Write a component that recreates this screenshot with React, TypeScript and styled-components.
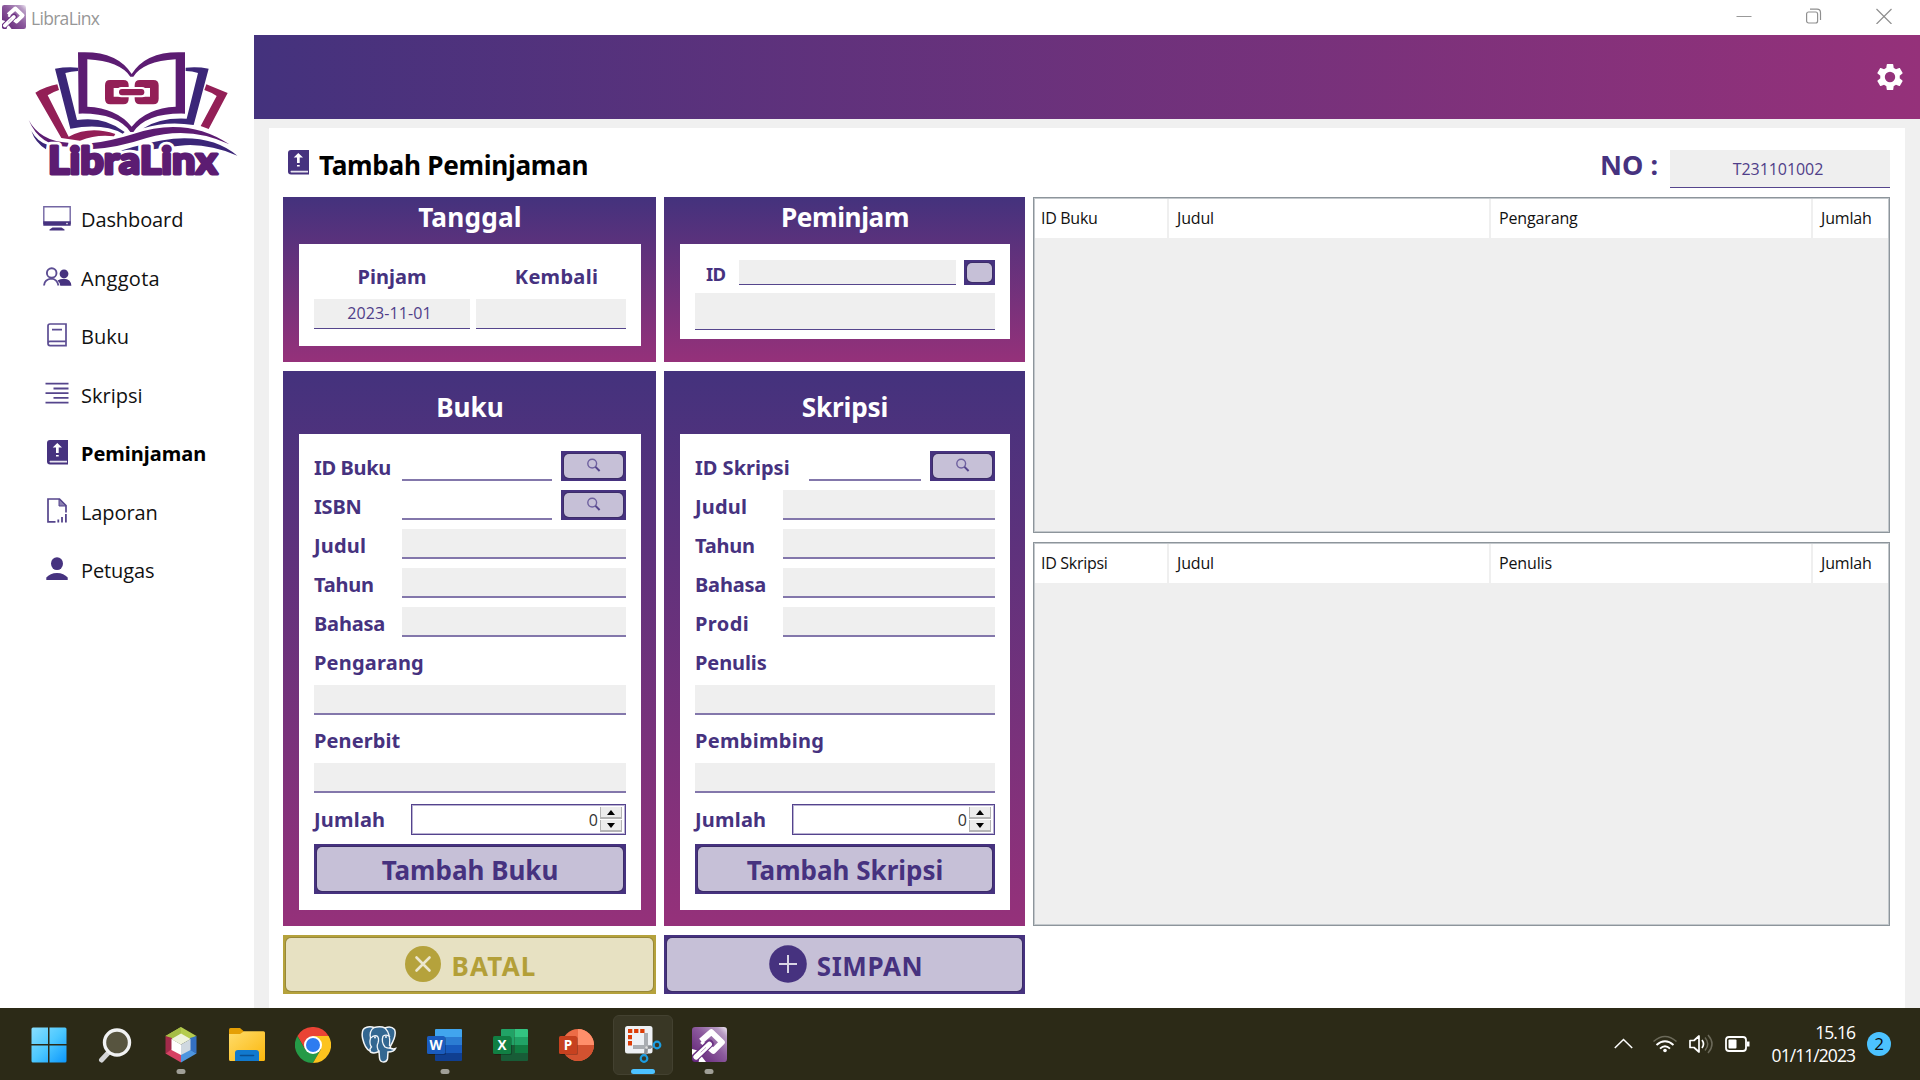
import React from 'react';
import styled, { createGlobalStyle } from 'styled-components';

const PURPLE = '#46327f';
const LILAC = '#c6c0d7';
const GREY = '#efefef';
const GRADIENT_FROM = '#44327d';
const GRADIENT_TO = '#95317a';

const GlobalStyle = createGlobalStyle`
  * { box-sizing: border-box; }
  body { margin: 0; background: #fff; overflow: hidden; }
  button { font: inherit; padding: 0; border: 0; }
`;

/* ---------- shell ---------- */

const Shell = styled.div`
  width: 1920px;
  height: 1080px;
  display: flex;
  flex-direction: column;
  background: #fff;
  color: #111;
  font-family: 'Noto Sans', 'Open Sans', sans-serif;
`;

const TitleBar = styled.header`
  height: 35px;
  flex: none;
  display: flex;
  align-items: flex-start;
  padding: 5px 28px 0 2px;
`;

const TitleText = styled.span`
  flex: 1;
  padding-left: 5px;
  font: 400 17.5px/27px 'Open Sans', sans-serif;
  letter-spacing: -0.7px;
  color: #979797;
`;

const WindowControls = styled.div`
  display: flex;
  gap: 54px;
  padding-top: 3px;
`;

const Body = styled.div`
  height: 973px;
  display: flex;
`;

/* ---------- sidebar ---------- */

const Sidebar = styled.nav`
  width: 254px;
  flex: none;
`;

const LogoArea = styled.div`
  height: 155px;
  padding: 15px 0 0 26px;
  line-height: 0;
`;

const NavItem = styled.a<{ $active?: boolean; $tracking?: number }>`
  height: 58.5px;
  display: grid;
  grid-template-columns: 30px 1fr;
  column-gap: 9px;
  align-items: center;
  padding: 2px 0 0 42px;
  font: ${p => (p.$active ? "700 20px/30px 'Noto Sans'" : "500 20px/30px 'Open Sans'")}, sans-serif;
  letter-spacing: ${p => p.$tracking ?? 0}px;
  color: ${p => (p.$active ? '#000' : '#111')};
  svg { display: block; margin: -4px auto 0; }
`;

/* ---------- main ---------- */

const Main = styled.main`
  flex: 1;
  background: #f0f0f0;
`;

const Banner = styled.div`
  height: 84px;
  display: flex;
  align-items: center;
  justify-content: flex-end;
  padding-right: 17px;
  background: linear-gradient(90deg, ${GRADIENT_FROM}, ${GRADIENT_TO});
`;

const Card = styled.section`
  height: 880px;
  margin: 9px 15px 0;
  padding: 0 15px 0 14px;
  background: #fff;
`;

const CardHead = styled.div`
  height: 69px;
  display: flex;
  align-items: flex-start;
  padding: 22px 0 0 5px;
`;

const PageTitle = styled.h1`
  flex: 1;
  margin: 0 0 0 10px;
  font-size: 26.2px;
  font-weight: 700;
  line-height: 30px;
  letter-spacing: -0.3px;
  color: #000;
`;

const NumberLabel = styled.span`
  margin-right: 12px;
  font-size: 27px;
  font-weight: 700;
  line-height: 30px;
  color: ${PURPLE};
`;

const Workspace = styled.div`
  display: grid;
  grid-template-columns: 373px 361px 857px;
  column-gap: 8px;
`;

const Stack = styled.div`
  display: grid;
  grid-template-rows: 165px 555px 59px;
  row-gap: 9px;
`;

const Panel = styled.section`
  padding: 0 15px 0 16px;
  background: linear-gradient(180deg, ${GRADIENT_FROM}, ${GRADIENT_TO});
`;

const PanelTitle = styled.h2<{ $tall?: boolean; $tracking?: number }>`
  height: ${p => (p.$tall ? 63 : 47)}px;
  margin: 0;
  padding-top: ${p => (p.$tall ? 8 : 0)}px;
  text-align: center;
  font-size: 26.2px;
  font-weight: 700;
  line-height: ${p => (p.$tall ? 57 : 41)}px;
  letter-spacing: ${p => p.$tracking ?? 0}px;
  color: #fff;
`;

const Sheet = styled.div<{ $h: number; $top: number }>`
  height: ${p => p.$h}px;
  padding: ${p => p.$top}px 15px 0;
  display: flex;
  flex-direction: column;
  gap: 9px;
  background: #fff;
`;

const Row = styled.div`
  display: flex;
  height: 30px;
  flex: none;
`;

const Label = styled.label<{ $w?: number; $tracking?: number }>`
  width: ${p => (p.$w ? p.$w + 'px' : 'auto')};
  flex: none;
  font-size: 20px;
  font-weight: 700;
  line-height: 34px;
  letter-spacing: ${p => p.$tracking ?? 0}px;
  white-space: nowrap;
  color: ${PURPLE};
`;

const Field = styled.div<{ $w?: number; $h?: number; $open?: boolean; $sharp?: boolean }>`
  ${p => (p.$w ? `width: ${p.$w}px; flex: none;` : 'flex: 1 0 auto;')}
  height: ${p => p.$h ?? 30}px;
  background: ${p => (p.$open ? '#fff' : GREY)};
  border-bottom: ${p => (p.$sharp ? '1px solid #55458c' : '2px solid #8377ab')};
  text-align: center;
  font: 400 16px/29px 'Open Sans', sans-serif;
  color: #4f3e89;
`;

const DateField = styled(Field)`
  padding-right: 5px;
  letter-spacing: 0.1px;
`;

const WideField = styled(Field)`
  flex: none;
`;

const FlushField = styled(WideField)`
  margin-top: -6px;
`;

const NumberField = styled(Field)`
  padding-right: 4px;
  line-height: 38px;
  letter-spacing: -0.05px;
`;

const DateGrid = styled.div`
  display: grid;
  grid-template-columns: 156px 150px;
  column-gap: 6px;
  row-gap: 11px;
`;

const DateLabel = styled(Label)<{ $shift: number }>`
  line-height: 25px;
  height: 24px;
  text-align: center;
  padding-left: ${p => p.$shift}px;
`;

const IdLabel = styled(Label)`
  padding-left: 11px;
  font-size: 18.5px;
  line-height: 27px;
  letter-spacing: -0.8px;
`;

const FramedButton = styled.button<{ $gold?: boolean; $w?: number; $h?: number; $push?: boolean }>`
  display: flex;
  flex: none;
  width: ${p => (p.$w ? p.$w + 'px' : '100%')};
  height: ${p => (p.$h ? p.$h + 'px' : '100%')};
  margin-left: ${p => (p.$push ? 'auto' : 0)};
  padding: 3px;
  background: ${p => (p.$gold ? '#b5a23c' : PURPLE)};
`;

const Face = styled.span<{ $gold?: boolean; $tracking?: number }>`
  flex: 1;
  display: flex;
  align-items: center;
  justify-content: center;
  border-radius: 5px;
  background: ${p => (p.$gold ? '#e7e1c2' : LILAC)};
  box-shadow: 0 0 0 1px ${p => (p.$gold ? '#97883a' : '#3c2c68')};
  font-size: 26px;
  font-weight: 700;
  line-height: 1;
  letter-spacing: ${p => p.$tracking ?? 0}px;
  color: ${p => (p.$gold ? '#b39f38' : PURPLE)};
  svg { display: block; margin: -2px 0 0 3px; }
`;

const ActionText = styled.span`
  padding: 3px 0 0 10px;
`;

const LoneText = styled.span`
  padding-top: 2px;
`;

const SpinBox = styled.div<{ $w: number }>`
  flex: none;
  width: ${p => p.$w}px;
  height: 31px;
  margin-left: auto;
  display: flex;
  justify-content: flex-end;
  padding-right: 3px;
  border: 1px solid #54438d;
  box-shadow: inset 0 0 0 1px #b9b2d2;
  background: #fff;
  font: 400 16px/31px 'Open Sans', sans-serif;
  color: #333;
`;

const SpinRow = styled(Row)`
  height: 31px;
  margin-top: 2px;
`;

const SpinLabel = styled(Label)`
  line-height: 31px;
`;

const SpinButtons = styled.div`
  display: grid;
  grid-template-rows: 12px 12px;
  row-gap: 1px;
  width: 22px;
  margin: 2px 0 0 2px;
`;

const SpinArrow = styled.span`
  display: flex;
  align-items: center;
  justify-content: center;
  background: #ececec;
  border: 1px solid #b4b4b4;
  border-width: 0 1px 2px 1px;
`;

/* ---------- tables ---------- */

const Tables = styled.div`
  display: flex;
  flex-direction: column;
  gap: 9px;
`;

const TableBox = styled.div<{ $h: number }>`
  height: ${p => p.$h}px;
  border: 1px solid #8d959b;
  box-shadow: inset 0 0 0 1px #c3c8cc;
  padding: 1px 2px 0 1px;
  background: ${GREY};
`;

const TableHead = styled.div`
  height: 36px;
  display: grid;
  grid-template-columns: 132px 320px 320px 75px;
  column-gap: 2px;
`;

const Th = styled.div`
  background: #fff;
  padding-left: 8px;
  font: 400 16px/39px 'Open Sans', sans-serif;
  letter-spacing: -0.15px;
  color: #111;
  &:first-child { padding-left: 6px; letter-spacing: -0.3px; }
`;

/* ---------- taskbar ---------- */

const Taskbar = styled.footer`
  height: 72px;
  flex: none;
  display: flex;
  align-items: center;
  background: #2c2a17;
  padding: 0 29px 0 19px;
`;

const Slot = styled.div<{ $active?: boolean }>`
  position: relative;
  width: 60px;
  height: 60px;
  margin: 1px 6px 0 0;
  flex: none;
  display: flex;
  align-items: center;
  justify-content: center;
  border-radius: 6px;
  background: ${p => (p.$active ? '#393725' : 'transparent')};
  border: 1px solid ${p => (p.$active ? '#434130' : 'transparent')};
  svg { display: block; }
`;

const RunMark = styled.i<{ $active?: boolean }>`
  position: absolute;
  bottom: 0;
  left: 50%;
  transform: translateX(-50%);
  width: ${p => (p.$active ? 24 : 9)}px;
  height: 5px;
  border-radius: 3px;
  background: ${p => (p.$active ? '#4cc2ff' : '#a09f97')};
`;

const Tray = styled.div`
  margin-left: auto;
  display: flex;
  align-items: center;
  svg { display: block; }
`;

const Clock = styled.div`
  width: 105px;
  text-align: right;
  font: 400 17.5px/23px 'Open Sans', sans-serif;
  letter-spacing: -0.95px;
  color: #fff;
`;

const Badge = styled.div`
  width: 24px;
  height: 24px;
  margin-left: 12px;
  margin-top: -1px;
  border-radius: 50%;
  background: #4cc2ff;
  text-align: center;
  font: 400 17px/24px 'Open Sans', sans-serif;
  color: #0b0b0b;
`;

/* ---------- drawings ---------- */

const Wordmark = styled.text`
  font: 900 116px Lato, sans-serif;
  fill: #5c1c72;
  stroke-linejoin: round;
`;

const Logo = () => (
  <svg width="214" height="140" viewBox="78 150 642 420">
    <g fill="#931f56">
      <path d="M106 278 Q140 258 172 253 L177 270 Q158 276 143 286 L206 410 Q270 376 346 402 L342 409 Q290 402 240 422 L184 414 Z" />
      <path d="M619 253 L683 279 L626 387 L602 378 L650 288 Q632 276 613 270 Z" />
    </g>
    <g fill="#3b2678">
      <path d="M165 206 Q200 200 234 203 L234 213 Q212 214 196 219 L231 360 Q315 348 374 396 L368 401 Q310 368 211 386 Z" />
      <path d="M557 203 Q592 199 626 206 L581 375 Q500 362 430 385 Q480 352 560 356 L594 219 Q577 213 557 213 Z" />
      <path d="M94 393 Q112 425 142 434 L138 448 Q106 428 94 393 Z" />
      <path d="M362 452 Q450 424 520 416 Q640 406 712 467 Q620 428 540 437 L512 440 L430 452 Z" />
    </g>
    <g fill="#5c1c72">
      <path fillRule="evenodd" d="M234 157 Q350 150 395 222 Q440 150 555 157 L555 341 Q440 338 400 396 L391 396 Q350 338 236 341 Z M262 178 L262 320 Q350 324 395 380 Q440 324 527 320 L527 178 Q430 184 400 230 L391 230 Q360 184 262 178 Z" />
      <path d="M86 360 Q120 424 205 428 L205 440 Q120 440 86 360 Z" />
      <path d="M272 430 Q330 424 400 402 Q560 348 688 433 Q570 376 440 414 Q350 444 272 448 Z" />
    </g>
    <g fill="#931f56">
      <path fillRule="evenodd" d="M330 240 H370 Q386 240 386 256 V296 Q386 313 370 313 H331 Q315 313 315 296 V256 Q315 240 330 240 Z M341 264 V290 H370 V264 Z" />
      <path fillRule="evenodd" d="M420 240 H460 Q476 240 476 256 V296 Q476 313 460 313 H421 Q404 313 404 296 V256 Q404 240 420 240 Z M421 264 V290 H450 V264 Z" />
    </g>
    <rect x="350" y="261" width="90" height="31" rx="14" fill="#fff" />
    <rect x="357" y="267" width="76" height="19" rx="9" fill="#931f56" />
    <Wordmark x="144" y="521" textLength="508" lengthAdjust="spacingAndGlyphs" stroke="#fff" strokeWidth="26">LibraLinx</Wordmark>
    <Wordmark x="144" y="521" textLength="508" lengthAdjust="spacingAndGlyphs" stroke="#5c1c72" strokeWidth="9">LibraLinx</Wordmark>
  </svg>
);

const AppIcon = ({ size, id }: { size: number; id: string }) => (
  <svg width={size} height={size} viewBox="0 0 105 105">
    <defs>
      <linearGradient id={id} x1="0" y1="1" x2="1" y2="0">
        <stop offset="0" stopColor="#5c1c72" />
        <stop offset=".55" stopColor="#8c5a9d" />
        <stop offset=".85" stopColor="#b89cc4" />
        <stop offset="1" stopColor="#f2ebf5" />
      </linearGradient>
    </defs>
    <rect width="105" height="105" rx="10" fill={`url(#${id})`} />
    <path d="M27 42 L58 15 L90 46 L64 72 L52 62" fill="none" stroke="#fff" strokeWidth="17" strokeLinejoin="round" />
    <path d="M28 44 L50 64" stroke="#fff" strokeWidth="10" />
    <path d="M0 66 L14 70 L26 84 L42 105 L20 105 L22 92 L12 88 L4 97 L0 94 Z" fill="#fff" />
    <path d="M10 91 L53 50" stroke="#6b3183" strokeWidth="24" strokeLinecap="round" />
    <path d="M12 90 L52 52" stroke="#fff" strokeWidth="16" strokeLinecap="round" />
    <path d="M26 76 L42 61" stroke="#9a6dab" strokeWidth="2" />
  </svg>
);

const BookUp = () => (
  <svg width="21" height="25" viewBox="0 0 21 25">
    <path d="M3 0 H21 V24.5 H3 Q0 24.5 0 21.5 V3 Q0 0 3 0 Z" fill={PURPLE} />
    <path d="M3 20.8 H20 V22.6 H3 Q1.8 21.7 3 20.8 Z" fill="#e8e5f0" />
    <path d="M10.3 3 L15 7.6 H11.7 V13 H9 V7.6 H5.7 Z M9 15 H11.7 V16.6 H9 Z" fill="#fff" />
  </svg>
);

const NAV_ICONS: Record<string, React.ReactNode> = {
  Dashboard: (
    <svg width="28" height="25" viewBox="0 0 28 25">
      <path d="M.8 .8 H27.2 V17.5 H.8 Z" fill="#fff" stroke="#7366a3" strokeWidth="1.4" />
      <path d="M.3 15.3 H27.7 V19.8 H.3 Z M9.5 21.6 H18.5 L21.5 23.6 V24.6 H6.5 V23.6 Z" fill={PURPLE} />
      <circle cx="24" cy="17.6" r=".8" fill="#fff" />
    </svg>
  ),
  Anggota: (
    <svg width="29" height="20" viewBox="0 0 29 20">
      <circle cx="8.7" cy="6" r="4.8" fill="none" stroke="#5c4d93" strokeWidth="1.9" />
      <path d="M1 18.5 Q1.5 12 8.7 11.6 Q14 12 15.5 18.5" fill="none" stroke="#5c4d93" strokeWidth="1.9" />
      <circle cx="21" cy="6.8" r="4.4" fill={PURPLE} />
      <path d="M14.5 13.5 Q17 11.8 21 11.8 Q27.8 12 28.4 18.7 H17.3 Q16.6 15 14.5 13.5 Z" fill={PURPLE} />
    </svg>
  ),
  Buku: (
    <svg width="20" height="24" viewBox="0 0 20 24">
      <path d="M3 1 H19 V22.6 H3 Q1 22.6 1 20.6 V3 Q1 1 3 1 Z M1 20 Q1 18.4 3 18.4 H19 M5 6.6 H15" fill="none" stroke="#5c4d93" strokeWidth="1.7" />
    </svg>
  ),
  Skripsi: (
    <svg width="24" height="23" viewBox="0 0 24 23">
      <path d="M.5 1.7 H23.5 M8.5 6.5 H23.5 M.5 11.2 H23.5 M8.5 15.9 H23.5 M.5 20.7 H23.5" stroke="#55458c" strokeWidth="1.8" />
    </svg>
  ),
  Peminjaman: <BookUp />,
  Laporan: (
    <svg width="20" height="25" viewBox="0 0 20 25">
      <path d="M8.5 23.8 H1 V1 H12.5 L19 7.5 V14.5" fill="none" stroke="#55458c" strokeWidth="1.7" />
      <path d="M12 1 V8 H19 Z" fill="#8a7fb0" stroke="#55458c" strokeWidth="1" />
      <path d="M11.3 24.5 V21.5 M15 24.5 V19 M18.9 24.5 V16" stroke="#55458c" strokeWidth="1.8" />
    </svg>
  ),
  Petugas: (
    <svg width="22" height="24" viewBox="0 0 22 24">
      <ellipse cx="11" cy="6.6" rx="6" ry="6.4" fill={PURPLE} />
      <path d="M.3 23 V20.6 Q4 16.2 11 16 Q18 16.2 21.7 20.6 V23 Z" fill={PURPLE} />
    </svg>
  ),
};

const Magnifier = () => (
  <svg width="16" height="14" viewBox="0 0 16 14">
    <circle cx="5.2" cy="5.6" r="4.4" fill="none" stroke="#6e609f" strokeWidth="1.4" />
    <path d="M8.500 8.900 L12.600 13" stroke="#55458c" strokeWidth="2" />
  </svg>
);

const Gear = () => (
  <svg width="26" height="26" viewBox="2 2 20 20" fill="#fff">
    <path d="M19.43 12.98c.04-.32.07-.64.07-.98s-.03-.66-.07-.98l2.11-1.65c.19-.15.24-.42.12-.64l-2-3.46c-.12-.22-.39-.3-.61-.22l-2.49 1c-.52-.4-1.08-.73-1.69-.98l-.38-2.65C14.46 2.18 14.25 2 14 2h-4c-.25 0-.46.18-.49.42l-.38 2.65c-.61.25-1.17.59-1.69.98l-2.49-1c-.23-.09-.49 0-.61.22l-2 3.46c-.13.22-.07.49.12.64l2.11 1.65c-.04.32-.07.65-.07.98s.03.66.07.98l-2.11 1.65c-.19.15-.24.42-.12.64l2 3.46c.12.22.39.3.61.22l2.49-1c.52.4 1.08.73 1.69.98l.38 2.65c.03.24.24.42.49.42h4c.25 0 .46-.18.49-.42l.38-2.65c.61-.25 1.17-.59 1.69-.98l2.49 1c.23.09.49 0 .61-.22l2-3.46c.12-.22.07-.49-.12-.64l-2.11-1.65zM12 16a4 4 0 1 1 0-8 4 4 0 0 1 0 8z" />
  </svg>
);

const Office = ({ letter, tile, children }: { letter: string; tile: string; children: React.ReactNode }) => (
  <svg width="36" height="36" viewBox="0 0 36 36">
    {children}
    <rect x="1" y="10" width="18" height="18" rx="1.6" fill="#000" opacity=".22" />
    <rect x="0" y="9" width="18" height="18" rx="1.6" fill={tile} />
    <text x="9" y="22.8" textAnchor="middle" fontFamily="'Open Sans', sans-serif" fontWeight="700" fontSize="13.5" fill="#fff">{letter}</text>
  </svg>
);

const WindowsIcon = () => (
  <svg width="36" height="36" viewBox="0 0 36 36">
    <defs>
      <linearGradient id="win" gradientUnits="userSpaceOnUse" x1="0" y1="0" x2="36" y2="36">
        <stop offset="0" stopColor="#8be0ff" />
        <stop offset=".5" stopColor="#4cc8ff" />
        <stop offset="1" stopColor="#0a95fc" />
      </linearGradient>
    </defs>
    <path d="M2 .5 H17 V17 H.5 V2 Q.5 .5 2 .5 Z M18.5 .5 H34 Q35.5 .5 35.5 2 V17 H18.5 Z M.5 18.5 H17 V35.5 H2 Q.5 35.5 .5 34 Z M18.5 18.5 H35.5 V34 Q35.5 35.5 34 35.5 H18.5 Z" fill="url(#win)" />
  </svg>
);

const SearchIcon = () => (
  <svg width="34" height="36" viewBox="0 0 34 36">
    <path d="M3.5 33 L11 25" stroke="#d3d4d6" strokeWidth="5" strokeLinecap="round" />
    <circle cx="19" cy="15.5" r="12.5" fill="#57543f" stroke="#f1f2f3" strokeWidth="3.4" />
  </svg>
);

const CubeIcon = () => (
  <svg width="32" height="37" viewBox="0 0 32 37">
    <path d="M16 1 L31.5 10 L16 18 L.5 10 Z" fill="#b5cc4e" />
    <path d="M16 1 V18 L.5 10 Z" fill="#a6bd45" />
    <path d="M.5 10 L7 12 V24 L.5 27.5 Z" fill="#a22a4a" />
    <path d="M.5 27.5 L7 23 L16 28 V36.5 Z" fill="#d74163" />
    <path d="M16 36.5 V28 L25 23 L31.5 27.5 Z" fill="#4d95df" />
    <path d="M31.5 10 L25 12 V24 L31.5 27.5 Z" fill="#3470c2" />
    <path d="M16 7.5 L25.5 13 L16 18.5 L6.5 13 Z" fill="#eff3de" />
    <path d="M6.5 13 L16 18.5 V29 L6.5 24 Z" fill="#fff" />
    <path d="M25.5 13 L16 18.5 V29 L25.5 24 Z" fill="#cfd8e0" />
  </svg>
);

const FolderIcon = () => (
  <svg width="36" height="33" viewBox="0 0 36 33">
    <defs>
      <linearGradient id="fold" x1="0" y1="0" x2="1" y2="1">
        <stop offset="0" stopColor="#ffdc6b" />
        <stop offset="1" stopColor="#fbb70c" />
      </linearGradient>
    </defs>
    <path d="M0 1.5 Q0 0 1.5 0 H11 L15 3.5 L12 8 H0 Z" fill="#e59f05" />
    <path d="M0 6 H11 L15 3.2 H34.5 Q36 3.2 36 4.7 V31.5 Q36 33 34.5 33 H1.5 Q0 33 0 31.5 Z" fill="url(#fold)" />
    <path d="M6 33 V25 Q6 22 9 22 H27 Q30 22 30 25 V33 Z" fill="#1179ce" />
    <path d="M11.5 27.5 H24.5" stroke="#0a4f91" strokeWidth="1.6" strokeLinecap="round" />
  </svg>
);

const ChromeIcon = () => (
  <svg width="36" height="36" viewBox="0 0 36 36">
    <path d="M18 9 H33.6 A18 18 0 0 0 2.4 9 L10.2 22.5 Z" fill="#ea4335" />
    <path d="M10.2 22.5 L2.4 9 A18 18 0 0 0 18 36 L25.8 22.5 Z" fill="#259a47" />
    <path d="M25.8 22.5 L18 36 A18 18 0 0 0 33.6 9 H18 Z" fill="#fcc31e" />
    <circle cx="18" cy="18" r="9" fill="#fff" />
    <circle cx="18" cy="18" r="7" fill="#2d7cf0" />
  </svg>
);

const ElephantIcon = () => (
  <svg width="36" height="37" viewBox="0 0 36 37">
    <path d="M9 25 Q4 23 1.5 12 Q0 3 5 1.5 Q9 0 13 1.5 Q20 0 24 2 Q30 -.5 33.5 3.5 Q36 9 29.5 20 L29 22 Q32 23.5 34.5 22.5 Q33 26 27 26 L26.5 33 Q25.5 36 22.5 36 Q19 36 18.5 32 L18 25.5 Q13 28 9.5 26 Z" fill="#336791" stroke="#f2f5f8" strokeWidth="1.5" />
    <path d="M13 1.5 Q8 5 9.5 12 Q8 18 10.5 21 Q8 23 9.5 25.5 M24 2 Q30 8 28.5 20 M18 25.5 Q15 21 17 17 Q18.5 12 16 10 Q12 9 10 12 M22 10 Q26 8 29 11 M22 10 Q20 16 24 21 Q27 22.5 29 22" fill="none" stroke="#f2f5f8" strokeWidth="1.3" />
    <circle cx="14" cy="11.5" r=".9" fill="#fff" />
    <circle cx="25" cy="11" r=".9" fill="#fff" />
  </svg>
);

const SnipIcon = () => (
  <svg width="37" height="37" viewBox="0 0 37 37">
    <rect x="0" y="0" width="27.5" height="27.5" rx="2.5" fill="#eef1f5" />
    <path d="M3 5 H19.5" stroke="#dc3c06" strokeWidth="4" strokeDasharray="4.3 1.8" />
    <path d="M5 9 V19.5" stroke="#dc3c06" strokeWidth="4" strokeDasharray="4.3 1.8" />
    <path d="M8 21 H26 M21 7 V28" fill="none" stroke="#a9adb2" strokeWidth="4" />
    <circle cx="21.5" cy="21.5" r="1.2" fill="#ddd" />
    <path d="M23 21.5 L28.5 20.5 M21.5 23 L20 29" stroke="#8a8e93" strokeWidth="2.5" />
    <circle cx="32" cy="19" r="3.3" fill="none" stroke="#1b9de2" strokeWidth="2.2" />
    <circle cx="19" cy="32.5" r="3.3" fill="none" stroke="#1b9de2" strokeWidth="2.2" />
  </svg>
);

/* ---------- composed parts ---------- */

type LineDef = { label: string; tracking?: number };

const BlankRow = ({ label, tracking }: LineDef) => (
  <Row>
    <Label $w={88} $tracking={tracking}>{label}</Label>
    <Field />
  </Row>
);

const BlankBlock = ({ label, tracking }: LineDef) => (
  <>
    <Row><Label $tracking={tracking}>{label}</Label></Row>
    <WideField $h={30} />
  </>
);

const SearchButton = () => (
  <FramedButton $w={65} $h={30} $push>
    <Face><Magnifier /></Face>
  </FramedButton>
);

const Quantity = ({ width }: { width: number }) => (
  <SpinRow>
    <SpinLabel $tracking={0.2}>Jumlah</SpinLabel>
    <SpinBox $w={width}>
      0
      <SpinButtons>
        <SpinArrow><svg width="8" height="5" viewBox="0 0 8 5"><path d="M4 0 L8 5 H0 Z" /></svg></SpinArrow>
        <SpinArrow><svg width="8" height="5" viewBox="0 0 8 5"><path d="M4 5 L8 0 H0 Z" /></svg></SpinArrow>
      </SpinButtons>
    </SpinBox>
  </SpinRow>
);

const DataTable = ({ height, columns }: { height: number; columns: string[] }) => (
  <TableBox $h={height}>
    <TableHead>{columns.map(c => <Th key={c}>{c}</Th>)}</TableHead>
  </TableBox>
);

const NAV: { name: string; tracking?: number; active?: boolean }[] = [
  { name: 'Dashboard', tracking: -0.1 },
  { name: 'Anggota', tracking: 0.3 },
  { name: 'Buku' },
  { name: 'Skripsi' },
  { name: 'Peminjaman', active: true },
  { name: 'Laporan', tracking: -0.1 },
  { name: 'Petugas', tracking: -0.1 },
];

export default function App() {
  return (
    <Shell>
      <GlobalStyle />
      <TitleBar>
        <AppIcon size={24} id="appTop" />
        <TitleText>LibraLinx</TitleText>
        <WindowControls>
          <svg width="16" height="16" viewBox="0 0 16 16"><path d="M.5 8.5 H15.5" stroke="#999" strokeWidth="1" /></svg>
          <svg width="16" height="16" viewBox="0 0 16 16" fill="none" stroke="#8f8f8f" strokeWidth="1.2">
            <rect x="0" y="4" width="11" height="11" rx="2" transform="translate(.6 0)" />
            <path d="M4 1.2 H11 Q14.500 1.200 14.500 4.700 V12" />
          </svg>
          <svg width="16" height="16" viewBox="0 0 16 16"><path d="M.5 1 L15.5 16 M15.5 1 L.5 16" stroke="#8f8f8f" strokeWidth="1.2" /></svg>
        </WindowControls>
      </TitleBar>

      <Body>
        <Sidebar>
          <LogoArea><Logo /></LogoArea>
          {NAV.map(n => (
            <NavItem key={n.name} $active={n.active} $tracking={n.tracking}>
              {NAV_ICONS[n.name]}
              {n.name}
            </NavItem>
          ))}
        </Sidebar>

        <Main>
          <Banner><Gear /></Banner>
          <Card>
            <CardHead>
              <BookUp />
              <PageTitle>Tambah Peminjaman</PageTitle>
              <NumberLabel>NO :</NumberLabel>
              <NumberField $w={220} $h={38} $sharp>T231101002</NumberField>
            </CardHead>

            <Workspace>
              <Stack>
                <Panel>
                  <PanelTitle $tracking={0.2}>Tanggal</PanelTitle>
                  <Sheet $h={102} $top={20}>
                    <DateGrid>
                      <DateLabel $shift={0}>Pinjam</DateLabel>
                      <DateLabel $shift={11} $tracking={0.3}>Kembali</DateLabel>
                      <DateField $h={30} $sharp>2023-11-01</DateField>
                      <DateField $h={30} $sharp />
                    </DateGrid>
                  </Sheet>
                </Panel>
                <Panel>
                  <PanelTitle $tall>Buku</PanelTitle>
                  <Sheet $h={476} $top={17}>
                    <Row>
                      <Label $w={88} $tracking={-0.35}>ID Buku</Label>
                      <Field $w={150} $open />
                      <SearchButton />
                    </Row>
                    <Row>
                      <Label $w={88} $tracking={-0.2}>ISBN</Label>
                      <Field $w={150} $open />
                      <SearchButton />
                    </Row>
                    <BlankRow label="Judul" tracking={0.2} />
                    <BlankRow label="Tahun" tracking={-0.2} />
                    <BlankRow label="Bahasa" tracking={-0.2} />
                    <BlankBlock label="Pengarang" tracking={0.2} />
                    <BlankBlock label="Penerbit" tracking={0.1} />
                    <Quantity width={215} />
                    <FramedButton $h={50}>
                      <Face><LoneText>Tambah Buku</LoneText></Face>
                    </FramedButton>
                  </Sheet>
                </Panel>
                <FramedButton $gold>
                  <Face $gold $tracking={1.2}>
                    <svg width="36" height="36" viewBox="0 0 36 36">
                      <circle cx="18" cy="18" r="18" fill="#b5a23c" />
                      <path d="M11.5 11.5 L24.5 24.5 M24.5 11.5 L11.5 24.5" stroke="#ece7cf" strokeWidth="2.6" strokeLinecap="round" />
                    </svg>
                    <ActionText>BATAL</ActionText>
                  </Face>
                </FramedButton>
              </Stack>

              <Stack>
                <Panel>
                  <PanelTitle $tracking={-0.4}>Peminjam</PanelTitle>
                  <Sheet $h={95} $top={16}>
                    <Row>
                      <IdLabel $w={44}>ID</IdLabel>
                      <Field $w={217} $h={25} $sharp />
                      <FramedButton $w={31} $h={25} $push><Face /></FramedButton>
                    </Row>
                    <FlushField $h={37} $sharp />
                  </Sheet>
                </Panel>
                <Panel>
                  <PanelTitle $tall $tracking={-0.2}>Skripsi</PanelTitle>
                  <Sheet $h={476} $top={17}>
                    <Row>
                      <Label $w={114}>ID Skripsi</Label>
                      <Field $w={112} $open />
                      <SearchButton />
                    </Row>
                    <BlankRow label="Judul" tracking={0.2} />
                    <BlankRow label="Tahun" tracking={-0.2} />
                    <BlankRow label="Bahasa" tracking={-0.2} />
                    <BlankRow label="Prodi" tracking={0.4} />
                    <BlankBlock label="Penulis" tracking={-0.1} />
                    <BlankBlock label="Pembimbing" tracking={0.3} />
                    <Quantity width={203} />
                    <FramedButton $h={50}>
                      <Face><LoneText>Tambah Skripsi</LoneText></Face>
                    </FramedButton>
                  </Sheet>
                </Panel>
                <FramedButton>
                  <Face $tracking={0.6}>
                    <svg width="38" height="38" viewBox="0 0 38 38">
                      <circle cx="19" cy="19" r="18.8" fill={PURPLE} />
                      <path d="M19 10 V28 M10 19 H28" stroke="#d8d4e4" strokeWidth="2" />
                    </svg>
                    <ActionText>SIMPAN</ActionText>
                  </Face>
                </FramedButton>
              </Stack>

              <Tables>
                <DataTable height={336} columns={['ID Buku', 'Judul', 'Pengarang', 'Jumlah']} />
                <DataTable height={384} columns={['ID Skripsi', 'Judul', 'Penulis', 'Jumlah']} />
              </Tables>
            </Workspace>
          </Card>
        </Main>
      </Body>

      <Taskbar>
        <Slot><WindowsIcon /></Slot>
        <Slot><SearchIcon /></Slot>
        <Slot><CubeIcon /><RunMark /></Slot>
        <Slot><FolderIcon /></Slot>
        <Slot><ChromeIcon /></Slot>
        <Slot><ElephantIcon /></Slot>
        <Slot>
          <Office letter="W" tile="#1b5cbe">
            <path d="M8 10 V3 Q8 2 9 2 H34 Q35 2 35 3 V10 Z" fill="#41a5ee" />
            <path d="M8 10 H35 V18 H8 Z" fill="#2b7cd3" />
            <path d="M8 18 H35 V26 H8 Z" fill="#185abd" />
            <path d="M8 26 H35 V33 Q35 34 34 34 H9 Q8 34 8 33 Z" fill="#103f91" />
          </Office>
          <RunMark />
        </Slot>
        <Slot>
          <Office letter="X" tile="#117f43">
            <path d="M8 18 V3 Q8 2 9 2 H21.500 V18 Z" fill="#21a366" />
            <path d="M21.5 2 H34 Q35 2 35 3 V10 H21.5 Z" fill="#33c481" />
            <path d="M8 18 H21.5 V26 H8 Z" fill="#185c37" />
            <path d="M21.5 10 H35 V18 H21.5 Z" fill="#21a366" />
            <path d="M21.5 18 H35 V26 H21.5 Z" fill="#107c41" />
            <path d="M8 26 H35 V33 Q35 34 34 34 H9 Q8 34 8 33 Z" fill="#185c37" />
          </Office>
        </Slot>
        <Slot>
          <Office letter="P" tile="#c7411f">
            <circle cx="19" cy="18" r="16" fill="#ed6c47" />
            <path d="M19 2 A16 16 0 0 1 35 18 H19 Z" fill="#ff8f6b" />
            <path d="M3 18 H35 A16 16 0 0 1 3 18 Z" fill="#d35230" />
          </Office>
        </Slot>
        <Slot $active><SnipIcon /><RunMark $active /></Slot>
        <Slot><AppIcon size={35} id="appBar" /><RunMark /></Slot>

        <Tray>
          <svg width="136" height="24" viewBox="0 0 136 24" fill="none" stroke="#fff" strokeWidth="1.5">
            <path d="M.8 16 L9.5 7.5 L18.2 16" />
            <path d="M39.500 9.500 Q51 -.5 62.500 9.500" stroke="#6b6959" />
            <path d="M42.500 13 Q51 5.500 59.500 13 M46 16.600 Q51 12 56 16.600" strokeWidth="1.9" />
            <circle cx="51" cy="18.500" r="1.8" fill="#fff" stroke="none" />
            <path d="M76 8.500 H80 L85 4 V20 L80 15.500 H76 Z" strokeLinejoin="round" strokeWidth="1.7" />
            <path d="M88 8 Q91 12 88 16" strokeWidth="1.7" />
            <path d="M91 5.500 Q96.500 12 91 18.500 M94 3 Q102 12 94 21" stroke="#6b6959" />
            <rect x="112" y="5" width="20" height="14" rx="3" strokeWidth="1.8" />
            <rect x="114.500" y="7.500" width="8" height="9" rx="1" fill="#fff" stroke="none" />
            <path d="M133 9.500 H135.500 V14.500 H133 Z" fill="#fff" stroke="none" />
          </svg>
          <Clock>
            15.16<br />01/11/2023
          </Clock>
          <Badge>2</Badge>
        </Tray>
      </Taskbar>
    </Shell>
  );
}
